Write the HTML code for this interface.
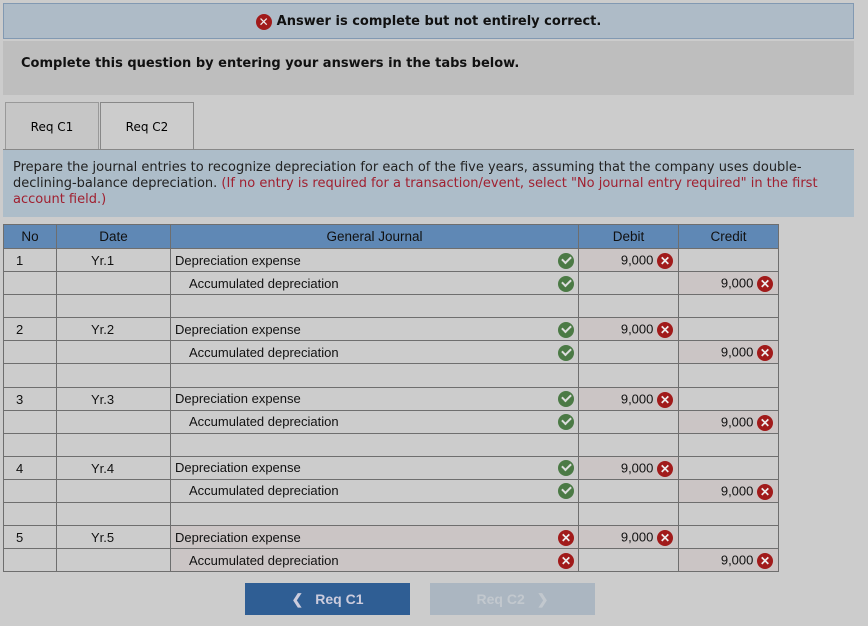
<html><head><style>
body{margin:0;background:#cccccc;font-family:"Liberation Sans",sans-serif;width:868px;height:626px;overflow:hidden;position:relative}
.ab{position:absolute}
.v{font-family:"DejaVu Sans",sans-serif}
.x{display:inline-block;width:16px;height:16px;border-radius:50%;background:#a11a1a;color:#eee;font-size:12px;line-height:16px;text-align:center;font-weight:bold;vertical-align:middle}
.c{display:inline-block;width:16px;height:16px;border-radius:50%;background:#4b7a45;vertical-align:middle;position:relative}
.c:after{content:"";position:absolute;left:4px;top:3px;width:7px;height:4px;border-left:2px solid #ddd;border-bottom:2px solid #ddd;transform:rotate(-45deg)}
table{border-collapse:collapse;position:absolute;left:3px;top:224px;font-size:13px;color:#111;table-layout:fixed}
td,th{border:1px solid #6e6e6e;height:23.1px;padding:2px 4px 0;box-sizing:border-box;vertical-align:middle;line-height:14px}
td:first-child{padding-left:12px}
td:nth-child(2){padding-left:34px}
th{background:#5f88b5;height:24px;font-weight:normal;font-size:13.5px;padding:0}
.r{text-align:right;padding-right:5px}.p{background:#cbc5c5}
.f{display:flex;justify-content:space-between;align-items:center;margin-top:-1px}
</style></head><body>
<div class="ab v" style="left:3px;top:3px;width:849px;height:34px;background:#aebbc7;border:1px solid #8299b2;text-align:center;line-height:35px;font-weight:bold;font-size:13px;color:#111"><span class="x" style="margin-right:5px">✕</span>Answer is complete but not entirely correct.</div>
<div class="ab v" style="left:3px;top:41px;width:851px;height:54px;background:#bebebe;font-weight:bold;font-size:13px;line-height:45px;padding-left:18px;box-sizing:border-box;color:#111">Complete this question by entering your answers in the tabs below.</div>
<div class="ab v" style="left:5px;top:102px;width:92px;height:47px;border:1px solid #999;border-bottom:none;background:#c6c6c6;text-align:center;line-height:48px;font-size:12px">Req C1</div>
<div class="ab v" style="left:100px;top:102px;width:92px;height:48px;border:1px solid #888;border-bottom:none;background:#cccccc;text-align:center;line-height:48px;font-size:12px">Req C2</div>
<div class="ab" style="left:3px;top:149px;width:851px;height:1px;background:#888"></div>
<div class="ab v" style="left:3px;top:150px;width:851px;height:67px;background:#adbdc9;font-size:13px;line-height:16px;padding:10px 10px;box-sizing:border-box;color:#222">Prepare the journal entries to recognize depreciation for each of the five years, assuming that the company uses double-declining-balance depreciation. <span style="color:#a02030">(If no entry is required for a transaction/event, select "No journal entry required" in the first account field.)</span></div>
<table>
<colgroup><col style="width:53px"><col style="width:114px"><col style="width:408px"><col style="width:100px"><col style="width:100px"></colgroup>
<tr><th>No</th><th>Date</th><th>General Journal</th><th>Debit</th><th>Credit</th></tr>
<tr><td>1</td><td>Yr.1</td><td><div class="f">Depreciation expense<span class="c"></span></div></td><td class="r p">9,000 <span class="x">✕</span></td><td></td></tr>
<tr><td></td><td></td><td style="padding-left:18px"><div class="f">Accumulated depreciation<span class="c"></span></div></td><td></td><td class="r p">9,000 <span class="x">✕</span></td></tr>
<tr><td></td><td></td><td></td><td></td><td></td></tr>
<tr><td>2</td><td>Yr.2</td><td><div class="f">Depreciation expense<span class="c"></span></div></td><td class="r p">9,000 <span class="x">✕</span></td><td></td></tr>
<tr><td></td><td></td><td style="padding-left:18px"><div class="f">Accumulated depreciation<span class="c"></span></div></td><td></td><td class="r p">9,000 <span class="x">✕</span></td></tr>
<tr><td></td><td></td><td></td><td></td><td></td></tr>
<tr><td>3</td><td>Yr.3</td><td><div class="f">Depreciation expense<span class="c"></span></div></td><td class="r p">9,000 <span class="x">✕</span></td><td></td></tr>
<tr><td></td><td></td><td style="padding-left:18px"><div class="f">Accumulated depreciation<span class="c"></span></div></td><td></td><td class="r p">9,000 <span class="x">✕</span></td></tr>
<tr><td></td><td></td><td></td><td></td><td></td></tr>
<tr><td>4</td><td>Yr.4</td><td><div class="f">Depreciation expense<span class="c"></span></div></td><td class="r p">9,000 <span class="x">✕</span></td><td></td></tr>
<tr><td></td><td></td><td style="padding-left:18px"><div class="f">Accumulated depreciation<span class="c"></span></div></td><td></td><td class="r p">9,000 <span class="x">✕</span></td></tr>
<tr><td></td><td></td><td></td><td></td><td></td></tr>
<tr><td>5</td><td>Yr.5</td><td class="p"><div class="f">Depreciation expense<span class="x">✕</span></div></td><td class="r p">9,000 <span class="x">✕</span></td><td></td></tr>
<tr><td></td><td></td><td class="p" style="padding-left:18px"><div class="f">Accumulated depreciation<span class="x">✕</span></div></td><td></td><td class="r p">9,000 <span class="x">✕</span></td></tr>
</table>
<div class="ab" style="left:245px;top:583px;width:165px;height:32px;background:#2f5e94;color:#ccd;font-weight:bold;font-size:14px;text-align:center;line-height:32px"><span style="margin-right:12px">&#x276E;</span>Req C1</div>
<div class="ab" style="left:430px;top:583px;width:165px;height:32px;background:#abb6c1;color:#c2c8ce;font-weight:bold;font-size:14px;text-align:center;line-height:32px">Req C2<span style="margin-left:12px">&#x276F;</span></div>
</body></html>
